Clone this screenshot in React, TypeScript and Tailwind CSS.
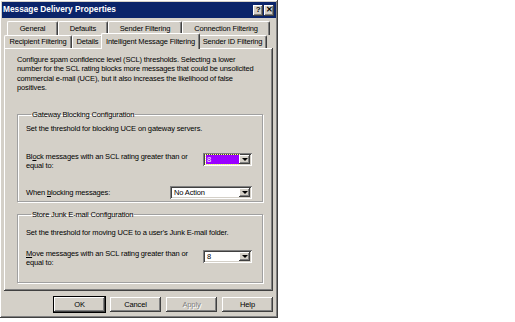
import React from "react";

const raised =
  "shadow-[inset_-1px_-1px_#404040,inset_1px_1px_#ffffff,inset_-2px_-2px_#808080,inset_2px_2px_#d4d0c8]";
const sunken =
  "shadow-[inset_1px_1px_#808080,inset_-1px_-1px_#ffffff,inset_2px_2px_#404040,inset_-2px_-2px_#d4d0c8]";

function Tab({ label, className, selected }: { label: string; className: string; selected?: boolean }) {
  return (
    <div
      className={
        "flex items-center justify-center rounded-t-[2px] border-l border-t border-r border-l-white border-t-white border-r-[#404040] shadow-[inset_-1px_0_#808080] bg-[#d4d0c8] " +
        className +
        (selected ? " relative z-10 -mt-[2px] -mb-[1px] -mx-[2px] px-[2px]" : "")
      }
    >
      <span className="whitespace-nowrap">{label}</span>
    </div>
  );
}

function Combo({ value, className, selected }: { value: string; className: string; selected?: boolean }) {
  return (
    <div className={"flex h-[13px] items-stretch bg-white p-[2px] " + sunken + " " + className}>
      <div className="flex flex-1 items-center pl-[1px]">
        {selected ? (
          <div className="flex h-full flex-1 items-center bg-[#9a00ff] pl-[1px] text-white outline outline-1 outline-dotted outline-[#ffff80]">
            {value}
          </div>
        ) : (
          <span className="pl-[1px]">{value}</span>
        )}
      </div>
      <div className={"flex w-[11px] items-center justify-center bg-[#d4d0c8] " + raised}>
        <div className="h-0 w-0 border-x-[3px] border-t-[3px] border-x-transparent border-t-black" />
      </div>
    </div>
  );
}

function Btn({ label, def, disabled }: { label: string; def?: boolean; disabled?: boolean }) {
  return (
    <div
      className={
        "flex h-[15px] w-[51px] items-center justify-center bg-[#d4d0c8] " +
        raised +
        (def ? " outline outline-1 outline-black" : "")
      }
    >
      <span className={disabled ? "text-[#808080] [text-shadow:1px_1px_#ffffff]" : ""}>{label}</span>
    </div>
  );
}

export default function App() {
  return (
    <div className="h-[322px] w-[515px] bg-white font-['Liberation_Sans',Arial,sans-serif] text-[7.5px] leading-[9.3px] tracking-[-0.15px] text-black">
      <div className={"flex h-[318px] w-[278px] flex-col bg-[#d4d0c8] p-[2px] " + raised}>
        {/* title bar */}
        <div className="flex h-[16px] items-center bg-[#0a246a] pl-[1px] pr-[2px]">
          <span className="flex-1 text-[8.3px] font-bold tracking-normal text-white">Message Delivery Properties</span>
          <div className={"flex h-[11px] w-[10px] items-center justify-center bg-[#d4d0c8] text-[8px] font-bold " + raised}>?</div>
          <div className={"ml-[1px] flex h-[11px] w-[10px] items-center justify-center bg-[#d4d0c8] text-[8px] font-bold " + raised}>✕</div>
        </div>

        {/* tabs */}
        <div className="mt-[3px] flex h-[14px] pl-[5px]">
          <Tab label="General" className="w-[51px]" />
          <Tab label="Defaults" className="w-[50px]" />
          <Tab label="Sender Filtering" className="w-[74px]" />
          <Tab label="Connection Filtering" className="w-[88px]" />
        </div>
        <div className="flex h-[13px] pl-[2px]">
          <Tab label="Recipient Filtering" className="w-[68px]" />
          <Tab label="Details" className="w-[31px]" />
          <Tab label="Intelligent Message Filtering" className="w-[99px]" selected />
          <Tab label="Sender ID Filtering" className="w-[69px]" />
        </div>

        {/* panel */}
        <div className={"ml-[2px] mr-[3px] flex h-[243px] flex-col px-[13px] pt-[7px] " + raised}>
          <p className="whitespace-nowrap">
            Configure spam confidence level (SCL) thresholds. Selecting a lower
            <br />
            number for the SCL rating blocks more messages that could be unsolicited
            <br />
            commercial e-mail (UCE), but it also increases the likelihood of false
            <br />
            positives.
          </p>

          <fieldset className="mt-[18px] mr-[-3px] h-[92px] border border-[#a0a0a0] pl-[8px] pr-[10px] shadow-[1px_1px_#ffffff,inset_1px_1px_#ffffff]">
            <legend className="ml-[5px] px-[1px]">Gateway Blocking Configuration</legend>
            <p className="mt-[5px]">Set the threshold for blocking UCE on gateway servers.</p>
            <div className="mt-[18px] flex items-start justify-between">
              <p className="w-[170px]">
                Bl<span className="underline">o</span>ck messages with an SCL rating greater than or
                <br />
                equal to:
              </p>
              <Combo value="8" selected className="mt-[1px] w-[49px]" />
            </div>
            <div className="mt-[16px] flex items-center justify-between">
              <p>
                When <span className="underline">b</span>locking messages:
              </p>
              <Combo value="No Action" className="w-[82px]" />
            </div>
          </fieldset>

          <fieldset className="mt-[8px] mr-[-3px] h-[73px] border border-[#a0a0a0] pl-[8px] pr-[10px] shadow-[1px_1px_#ffffff,inset_1px_1px_#ffffff]">
            <legend className="ml-[5px] px-[1px]">Store Junk E-mail Configuration</legend>
            <p className="mt-[9px]">Set the threshold for moving UCE to a user&apos;s Junk E-mail folder.</p>
            <div className="mt-[11px] flex items-start justify-between">
              <p className="w-[170px]">
                <span className="underline">M</span>ove messages with an SCL rating greater than or
                <br />
                equal to:
              </p>
              <Combo value="8" className="mt-[1px] w-[49px]" />
            </div>
          </fieldset>
        </div>

        {/* buttons */}
        <div className="mt-[6px] flex justify-end gap-[5px] pr-[3px]">
          <Btn label="OK" def />
          <Btn label="Cancel" />
          <Btn label="Apply" disabled />
          <Btn label="Help" />
        </div>
      </div>
    </div>
  );
}
